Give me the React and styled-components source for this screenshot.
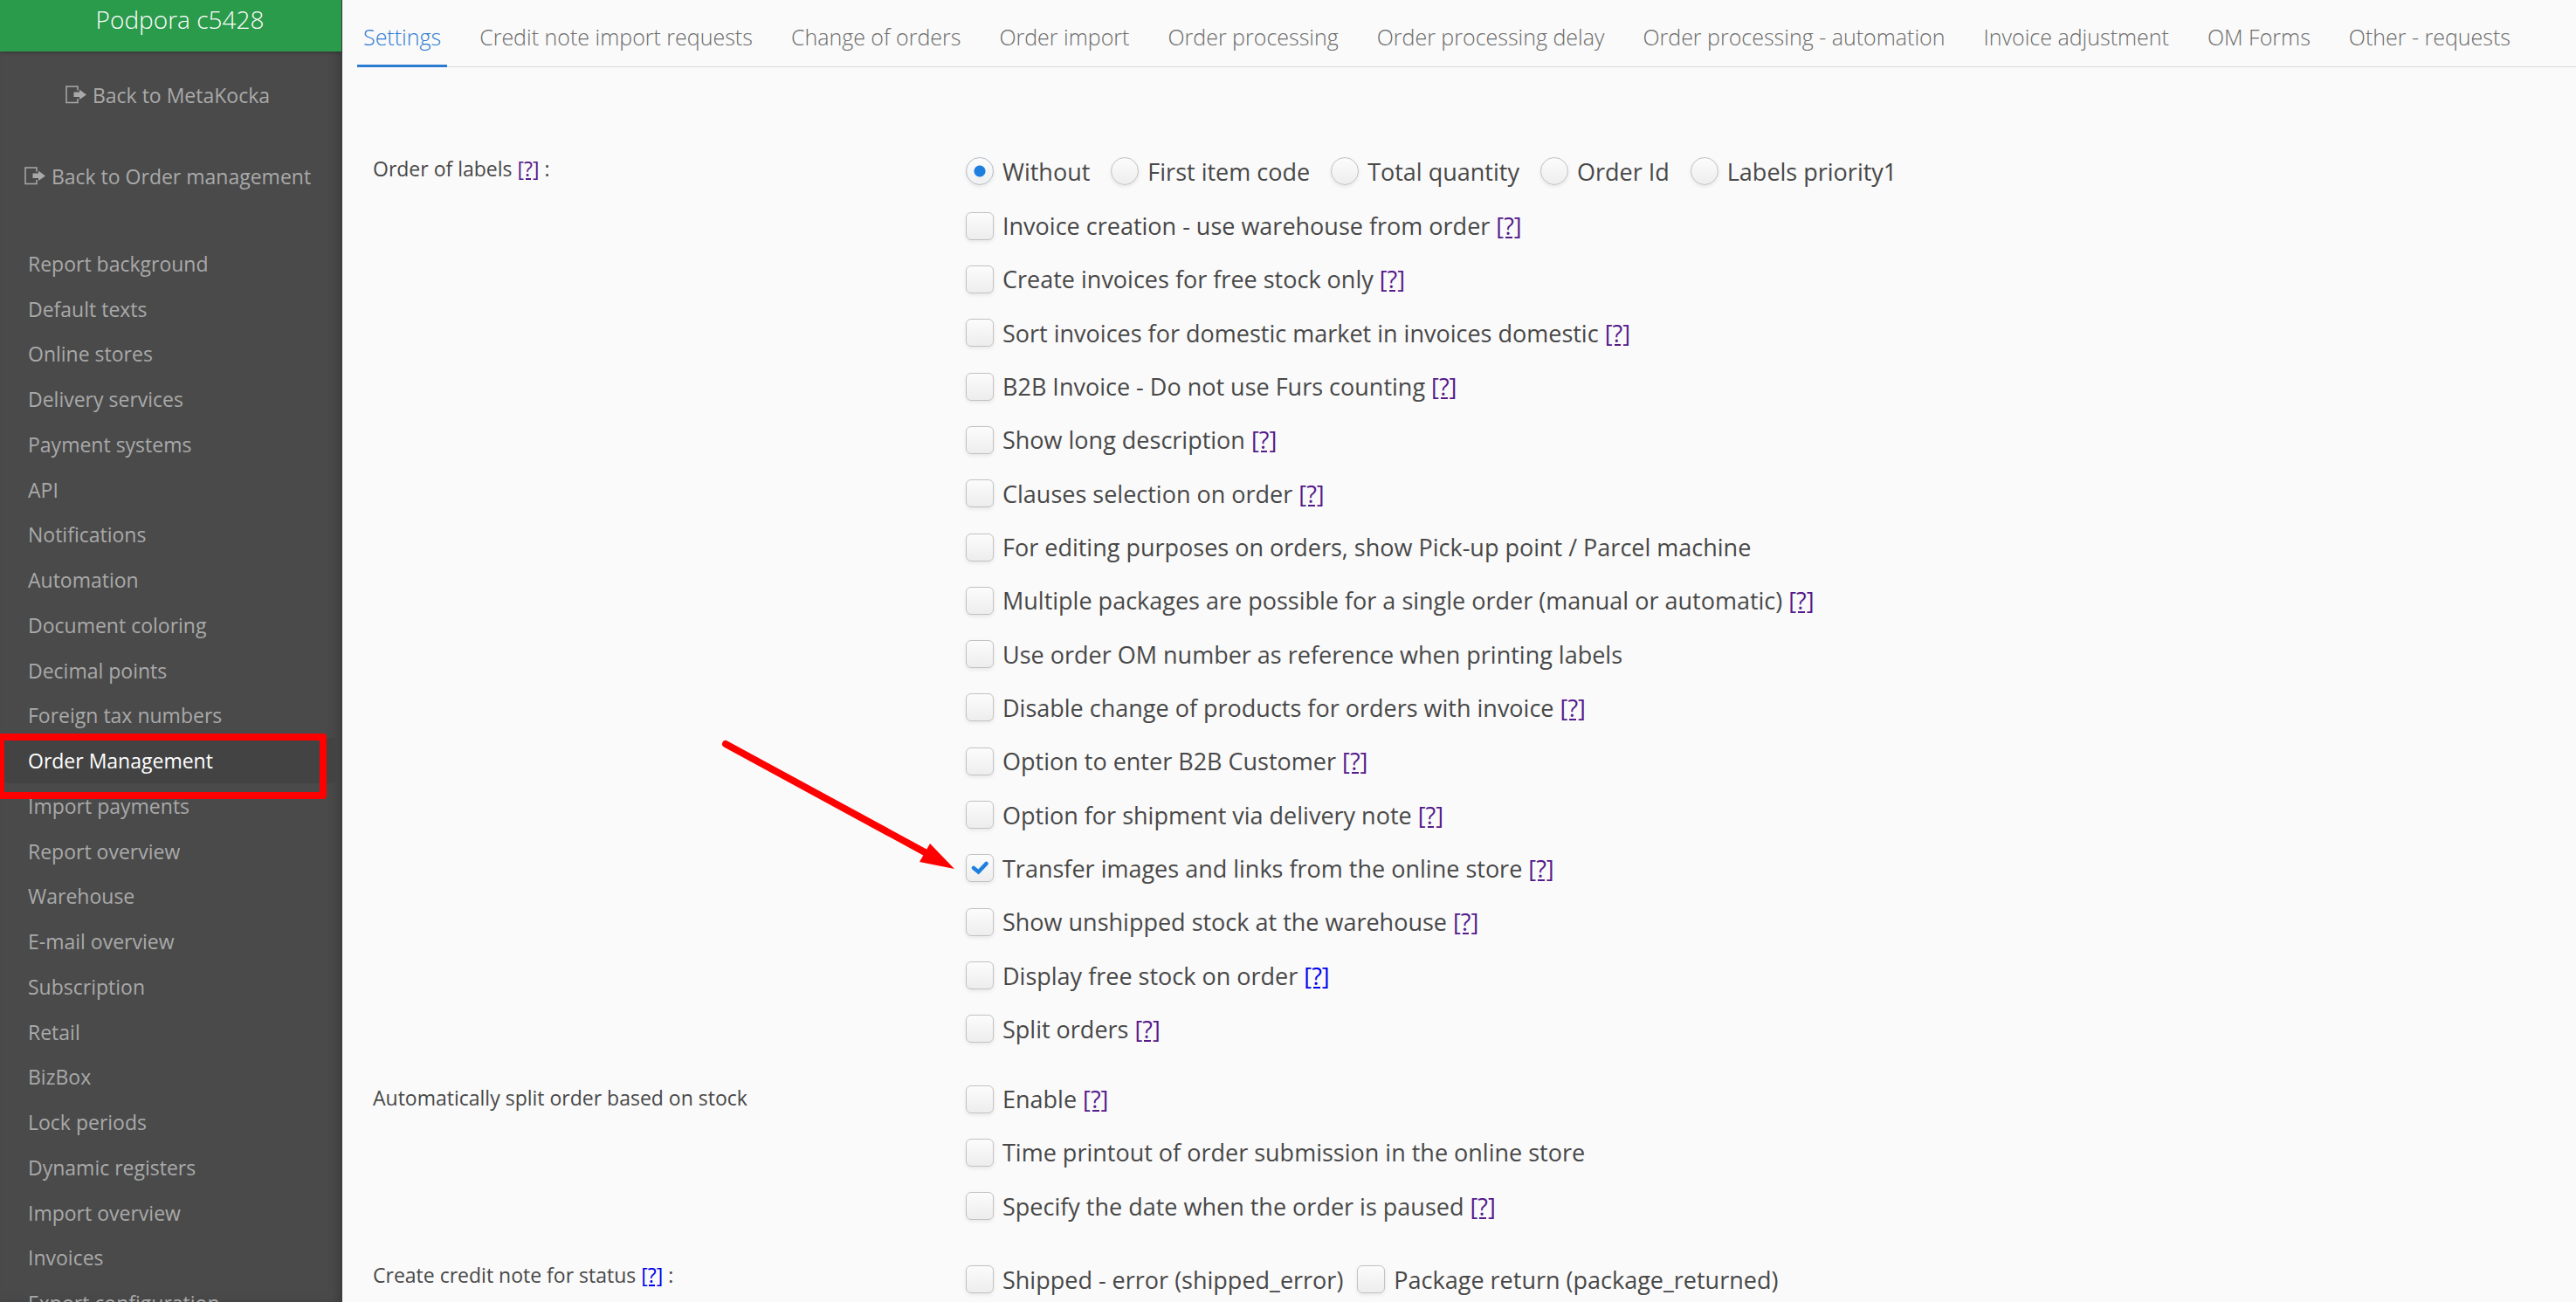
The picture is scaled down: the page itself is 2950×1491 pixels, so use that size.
import React, { useState } from 'react'
import styled, { createGlobalStyle, css } from 'styled-components'

const tabs = [
  'Settings',
  'Credit note import requests',
  'Change of orders',
  'Order import',
  'Order processing',
  'Order processing delay',
  'Order processing - automation',
  'Invoice adjustment',
  'OM Forms',
  'Other - requests',
]

const menu = [
  'Report background',
  'Default texts',
  'Online stores',
  'Delivery services',
  'Payment systems',
  'API',
  'Notifications',
  'Automation',
  'Document coloring',
  'Decimal points',
  'Foreign tax numbers',
  'Order Management',
  'Import payments',
  'Report overview',
  'Warehouse',
  'E-mail overview',
  'Subscription',
  'Retail',
  'BizBox',
  'Lock periods',
  'Dynamic registers',
  'Import overview',
  'Invoices',
  'Export configuration',
]

const labelOrders = ['Without', 'First item code', 'Total quantity', 'Order Id', 'Labels priority1']

const labelOptions = [
  { text: 'Invoice creation - use warehouse from order', help: 'visited' },
  { text: 'Create invoices for free stock only', help: 'visited' },
  { text: 'Sort invoices for domestic market in invoices domestic', help: 'visited' },
  { text: 'B2B Invoice - Do not use Furs counting', help: 'visited' },
  { text: 'Show long description', help: 'visited' },
  { text: 'Clauses selection on order', help: 'visited' },
  { text: 'For editing purposes on orders, show Pick-up point / Parcel machine' },
  { text: 'Multiple packages are possible for a single order (manual or automatic)', help: 'visited' },
  { text: 'Use order OM number as reference when printing labels' },
  { text: 'Disable change of products for orders with invoice', help: 'visited' },
  { text: 'Option to enter B2B Customer', help: 'visited' },
  { text: 'Option for shipment via delivery note', help: 'visited' },
  { text: 'Transfer images and links from the online store', help: 'visited', checked: true, pointed: true },
  { text: 'Show unshipped stock at the warehouse', help: 'visited' },
  { text: 'Display free stock on order', help: 'new' },
  { text: 'Split orders', help: 'visited' },
]

const splitOptions = [
  { text: 'Enable', help: 'visited' },
  { text: 'Time printout of order submission in the online store' },
  { text: 'Specify the date when the order is paused', help: 'visited' },
]

const statusOptions = [
  { text: 'Shipped - error (shipped_error)' },
  { text: 'Package return (package_returned)' },
]

function ExitIcon() {
  return (
    <svg width="24" height="22" viewBox="0 0 24 22" fill="none" aria-hidden="true">
      <path d="M14 5.500V1H1V19.500H14V15" stroke="currentColor" strokeWidth="1.500" />
      <path d="M9.500 7.500H16V4.500L24 10.500L16 16V13H9.500z" fill="currentColor" />
    </svg>
  )
}

function Help({ kind }) {
  return <HelpLink href="#help" $kind={kind}>[?]</HelpLink>
}

function Check({ option }) {
  const [checked, setChecked] = useState(!!option.checked)
  return (
    <Option>
      {option.pointed && (
        <Arrow width="280" height="160" viewBox="0 0 280 160" aria-hidden="true">
          <path d="M6 7L236 132" stroke="#f00" strokeWidth="8" strokeLinecap="round" />
          <path d="M268 150L240 121L228 142Z" fill="#f00" />
        </Arrow>
      )}
      <Choice>
        <Mark>
          <Box type="checkbox" checked={checked} onChange={() => setChecked(!checked)} />
          {checked && (
            <Tick width="20" height="18" viewBox="0 0 20 18" aria-hidden="true">
              <path d="M3 9L8.500 13.500L17.500 4" fill="none" stroke="#1f7fe0" strokeWidth="4.500" strokeLinecap="round" />
            </Tick>
          )}
        </Mark>
        {option.text}
      </Choice>
      {option.help && <>&nbsp;<Help kind={option.help} /></>}
    </Option>
  )
}

export default function App() {
  const [tab, setTab] = useState(tabs[0])
  const [order, setOrder] = useState(labelOrders[0])

  return (
    <Page>
      <GlobalStyle />
      <Sidebar>
        <Account>Podpora c5428</Account>
        <BackLinks>
          <BackLink href="#metakocka"><ExitIcon />Back to MetaKocka</BackLink>
          <BackLink href="#orders"><ExitIcon />Back to Order management</BackLink>
        </BackLinks>
        <Menu>
          {menu.map((item) => (
            <li key={item}>
              <MenuLink href="#menu" $active={item === 'Order Management'}>{item}</MenuLink>
            </li>
          ))}
        </Menu>
      </Sidebar>
      <Main>
        <Tabs>
          {tabs.map((name) => (
            <Tab key={name} type="button" $active={name === tab} onClick={() => setTab(name)}>{name}</Tab>
          ))}
        </Tabs>
        <Form>
          <Group>
            <Legend>Order of labels <Help kind="visited" /> :</Legend>
            <div>
              <RadioRow>
                {labelOrders.map((name) => (
                  <Choice key={name}>
                    <Radio type="radio" name="labels" checked={name === order} onChange={() => setOrder(name)} />
                    {name}
                  </Choice>
                ))}
              </RadioRow>
              <Options $height={981}>
                {labelOptions.map((option) => <Check key={option.text} option={option} />)}
              </Options>
            </div>
          </Group>
          <Group>
            <Legend>Automatically split order based on stock</Legend>
            <Options $height={184}>
              {splitOptions.map((option) => <Check key={option.text} option={option} />)}
            </Options>
          </Group>
          <Group>
            <Legend>Create credit note for status <Help kind="new" /> :</Legend>
            <StatusRow>
              {statusOptions.map((option) => <Check key={option.text} option={option} />)}
            </StatusRow>
          </Group>
        </Form>
      </Main>
    </Page>
  )
}

const GlobalStyle = createGlobalStyle`
  * {
    box-sizing: border-box;
  }
  body {
    margin: 0;
    background-color: #fafafa;
    color: #484848;
    font-family: 'Open Sans', 'Noto Sans', sans-serif;
  }
`

const Page = styled.div`
  display: flex;
  height: 100vh;
  overflow: hidden;
`

const Sidebar = styled.aside`
  flex: none;
  width: 392px;
  overflow: hidden;
  background-color: #4a4a4a;
  box-shadow: inset -1px 0 0 #3c3c3c, inset -8px 0 12px -4px #3a3a3a;
`

const Account = styled.div`
  height: 59px;
  margin-right: 1px;
  padding: 4px 0 0 21px;
  background-color: #2a9a4b;
  box-shadow: 0 1px 4px rgba(0, 0, 0, 0.3);
  color: white;
  font-size: 28px;
  font-weight: 300;
  line-height: 36px;
  text-align: center;
`

const BackLinks = styled.div`
  display: flex;
  flex-direction: column;
  padding: 3px 8px 28px 0;
`

const BackLink = styled.a`
  display: flex;
  align-items: center;
  justify-content: center;
  gap: 7px;
  height: 93px;
  color: #a9a9a9;
  font-size: 23px;
  text-decoration: none;
`

const Menu = styled.ul`
  display: grid;
  grid-auto-rows: 1fr;
  min-height: 1242px;
  margin: 0;
  padding: 0;
  list-style: none;
`

const MenuLink = styled.a`
  position: relative;
  display: flex;
  align-items: center;
  height: 100%;
  margin-right: 8px;
  padding-left: 32px;
  color: #a9a9a9;
  font-size: 23px;
  text-decoration: none;
  ${({ $active }) => $active && css`
    background-color: #434343;
    color: white;
    &::after {
      content: '';
      position: absolute;
      z-index: 1;
      top: -5px;
      bottom: -18px;
      left: -3px;
      right: 10px;
      border: 8px solid #f00;
      border-radius: 4px;
    }
  `}
`

const Main = styled.main`
  flex: 1;
  min-width: 0;
`

const Tabs = styled.nav`
  display: flex;
  gap: 30px;
  height: 77px;
  margin-left: 17px;
  box-shadow: inset 0 -1px 0 #d9dcdf;
`

const Tab = styled.button`
  padding: 9px 7px 0;
  border: 0;
  border-bottom: 3px solid ${({ $active }) => ($active ? '#2c7bd2' : 'transparent')};
  background: none;
  color: ${({ $active }) => ($active ? '#2c7bd2' : '#6b6b6b')};
  font-family: inherit;
  font-size: 25px;
  font-weight: 300;
  white-space: nowrap;
  cursor: pointer;
`

const Form = styled.form`
  display: flex;
  flex-direction: column;
  gap: 19px;
  padding: 87px 24px 0 35px;
`

const Group = styled.div`
  display: grid;
  grid-template-columns: 679px 1fr;
`

const Legend = styled.div`
  font-size: 23px;
  line-height: 58px;
`

const RadioRow = styled.div`
  display: flex;
  align-items: center;
  gap: 24px;
  height: 64px;
`

const Options = styled.div`
  display: grid;
  grid-auto-rows: 1fr;
  min-height: ${({ $height }) => $height}px;
`

const StatusRow = styled.div`
  display: flex;
  gap: 16px;
  height: 68px;
`

const Option = styled.div`
  position: relative;
  display: flex;
  align-items: center;
  font-size: 27px;
`

const Choice = styled.label`
  display: flex;
  align-items: center;
  gap: 10px;
  font-size: 27px;
`

const Mark = styled.span`
  position: relative;
  display: flex;
`

const inputLook = css`
  appearance: none;
  width: 32px;
  height: 32px;
  margin: 0;
  border: 1px solid #c2c2c2;
  background: linear-gradient(#fcfcfc, #ededed);
  box-shadow: 0 2px 4px rgba(0, 0, 0, 0.08);
`

const Box = styled.input`
  ${inputLook}
  border-radius: 6px;
`

const Radio = styled.input`
  ${inputLook}
  border-radius: 50%;
  &:checked {
    border-color: #b4bcc6;
    background: radial-gradient(circle, #1f7fe0 6px, transparent 7px), linear-gradient(#fcfcfc, #f0f0f0);
  }
`

const Tick = styled.svg`
  position: absolute;
  top: 7px;
  left: 6px;
  pointer-events: none;
`

const HelpLink = styled.a`
  color: ${({ $kind }) => ($kind === 'new' ? '#0000ee' : '#551a8b')};
`

const Arrow = styled.svg`
  position: absolute;
  top: -119px;
  left: -281px;
  pointer-events: none;
`
